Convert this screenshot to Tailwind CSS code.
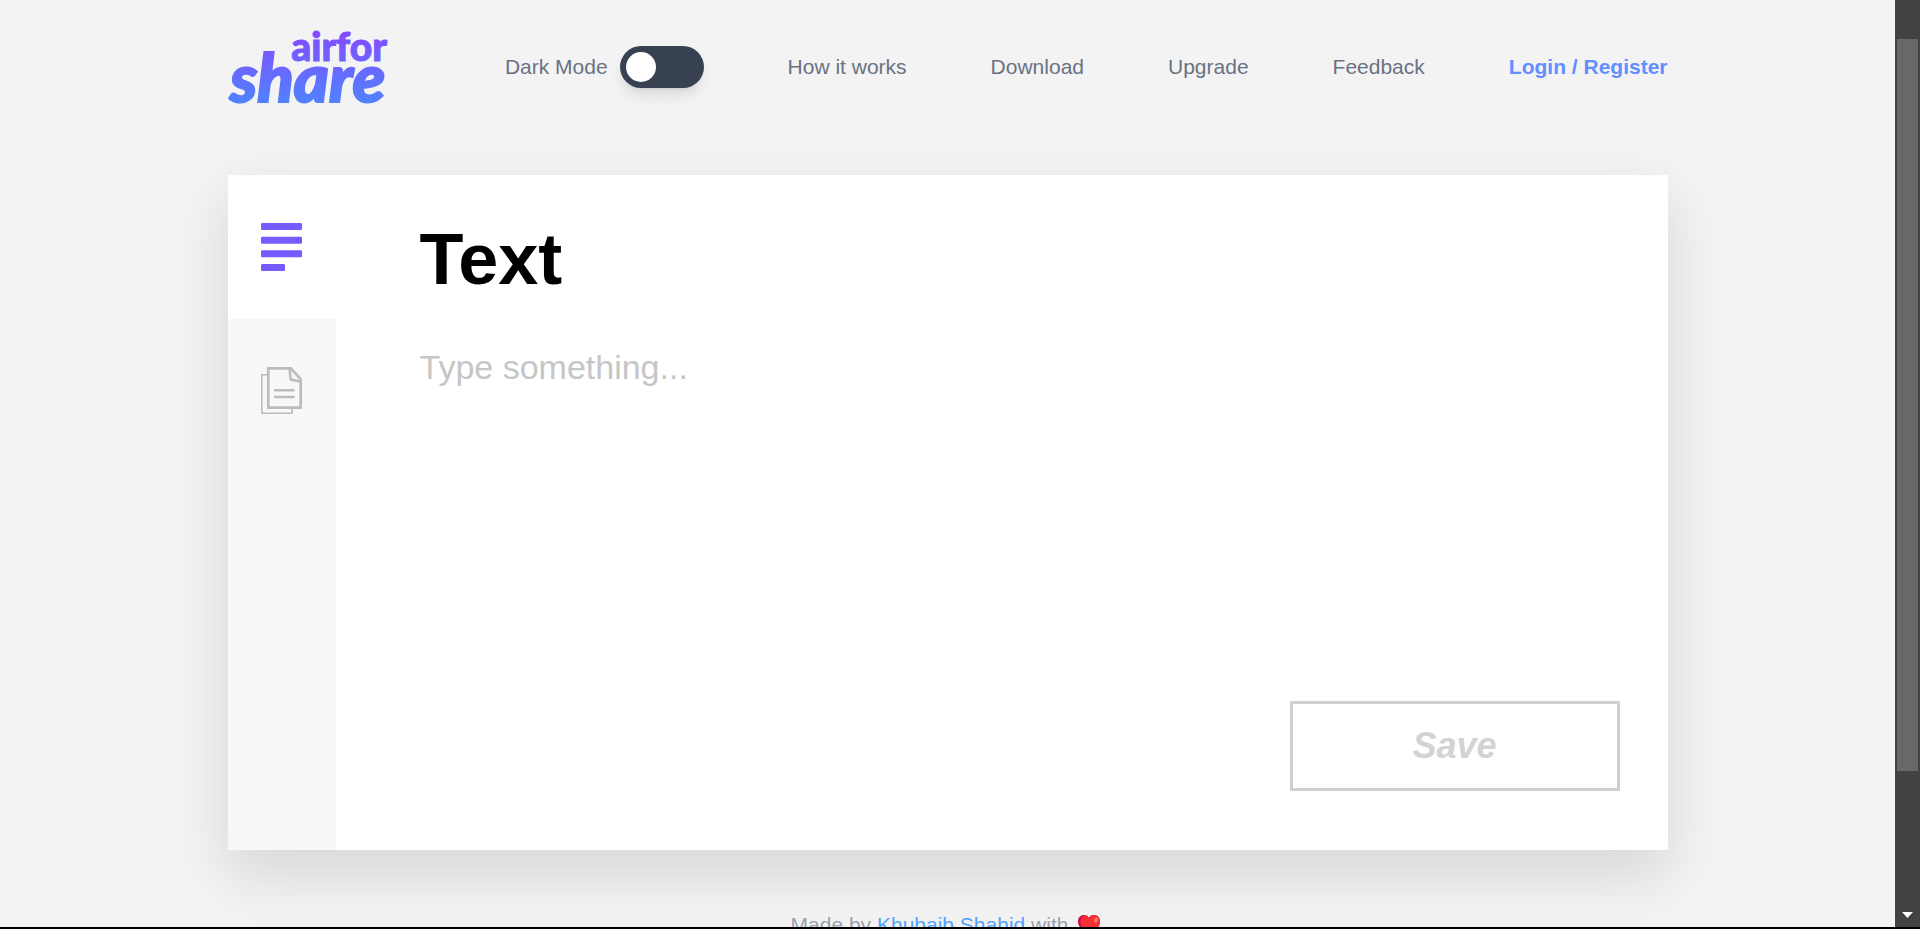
<!DOCTYPE html>
<html lang="en">
<head>
<meta charset="utf-8">
<title>AirForShare</title>
<script src="https://cdn.jsdelivr.net/npm/@tailwindcss/browser@4"></script>
</head>
<body class="flex h-screen flex-col overflow-hidden bg-black font-['Liberation_Sans',Arial,sans-serif]">
<div class="mb-[2px] flex min-h-0 flex-1 overflow-hidden bg-[#f3f3f3]">
  <div class="min-w-0 flex-1 overflow-hidden">
    <div class="mx-auto max-w-[1440px]">
      <header class="flex items-center justify-between pt-6 pb-6 text-[21px] leading-8 text-gray-500">
        <a href="#" aria-label="airfor share">
          <svg width="164" height="86" viewBox="0 0 164 86" class="overflow-visible">
            <defs>
              <linearGradient id="brand" gradientUnits="userSpaceOnUse" x1="0" y1="4" x2="0" y2="80">
                <stop offset="0" stop-color="#8648ff"/>
                <stop offset="1" stop-color="#4f83ff"/>
              </linearGradient>
            </defs>
            <g fill="url(#brand)" stroke="url(#brand)" font-family="Lato, sans-serif" font-weight="900">
              <text x="159" y="37" font-size="39" stroke-width="1" text-anchor="end">airfor</text>
              <text x="2" y="78" font-size="67" stroke-width="2" font-style="italic">share</text>
            </g>
          </svg>
        </a>
        <nav class="flex items-center gap-[84px]">
          <label class="flex cursor-pointer items-center gap-3">
            <span>Dark Mode</span>
            <input type="checkbox" role="switch" class="h-[42px] w-[84px] appearance-none rounded-full bg-[#384152] p-[6px] shadow-lg before:block before:size-[30px] before:rounded-full before:bg-white before:content-['']">
          </label>
          <a href="#">How it works</a>
          <a href="#">Download</a>
          <a href="#">Upgrade</a>
          <a href="#">Feedback</a>
          <a href="#" class="font-bold text-[#628fff]">Login / Register</a>
        </nav>
      </header>
      <main class="mt-[41px] flex min-h-[675px] bg-white shadow-[0_24px_56px_rgba(0,0,0,0.12)]">
        <div class="w-[108px] shrink-0 bg-[#f8f8f8]">
          <button type="button" aria-label="Text" class="flex w-full justify-center bg-white py-12">
            <svg width="42" height="48" viewBox="0 0 42 48" fill="#755cff">
              <rect width="41" height="7" rx="1.2"/>
              <rect y="13.7" width="41" height="7" rx="1.2"/>
              <rect y="27.2" width="41" height="7" rx="1.2"/>
              <rect y="41" width="24" height="7" rx="1.2"/>
            </svg>
          </button>
          <button type="button" aria-label="Files" class="flex w-full justify-center py-12">
            <svg width="42" height="48" viewBox="0 0 42 48" fill="none" stroke="#bcbcbc">
              <path d="M6 7.7H.8V46.2H31.2V42" stroke-width="1.6"/>
              <path d="M7.3 1.3H29.8L39.7 12.2V40.6H7.3Z" stroke-width="2.700"/>
              <path d="M28.4 1.5L29.8 12.6L39.5 14.4" stroke-width="2.500"/>
              <path d="M13 23.2H33.5M13 30H33.5" stroke-width="2.500"/>
            </svg>
          </button>
        </div>
        <section class="flex flex-1 flex-col pt-12 pr-12 pb-[59px] pl-[84px]">
          <h1 class="text-[72px] leading-[72px] font-bold text-black"><label for="note">Text</label></h1>
          <textarea id="note" placeholder="Type something..." class="mt-12 flex-1 resize-none text-[34px] leading-12 text-black outline-none placeholder:text-[#c6c6c6]"></textarea>
          <button type="button" class="mt-6 h-[90px] w-[330px] self-end border-3 border-[#d0d0d0] text-[36px] leading-10 font-bold text-[#d3d3d3] italic">Save</button>
        </section>
      </main>
      <footer class="mt-[59px] flex items-center justify-center gap-[10px] pr-1 text-[21px] leading-8 text-gray-400">
        <p>Made by <a href="#" class="text-blue-400">Khubaib Shahid</a> with</p>
        <svg width="22" height="20" viewBox="0 0 22 20">
          <path d="M11 20C5 16 0 12 0 6.5C0 2.5 2.5 0 6 0C8.500 0 10.300 1.200 11 3C11.700 1.200 13.500 0 16 0C19.500 0 22 2.500 22 6.500C22 12 17 16 11 20Z" fill="#ca0b4a"/>
          <path d="M12 19C7 15.500 2.500 12 2.500 6.500C2.500 3 4.500 1 7 1C9.500 1 10.800 2.500 11.300 4.500C12 2 13.500 0 16 0C19.500 0 22 2.500 22 6.500C22 12 17 16 12 19Z" fill="#f92f33"/>
          <ellipse cx="18" cy="5" rx="1.800" ry="2.800" transform="rotate(20 18 5)" fill="#f8796b"/>
        </svg>
      </footer>
    </div>
  </div>
  <div class="flex w-[25px] shrink-0 flex-col items-center bg-[#424242]" aria-hidden="true">
    <div class="mt-[39px] h-[79%] w-[21px] bg-[#686868]"></div>
    <svg class="mt-auto mb-[9px]" width="11" height="6" viewBox="0 0 11 6"><path d="M0 0H11L5.500 6Z" fill="#fff"/></svg>
  </div>
</div>
</body>
</html>
